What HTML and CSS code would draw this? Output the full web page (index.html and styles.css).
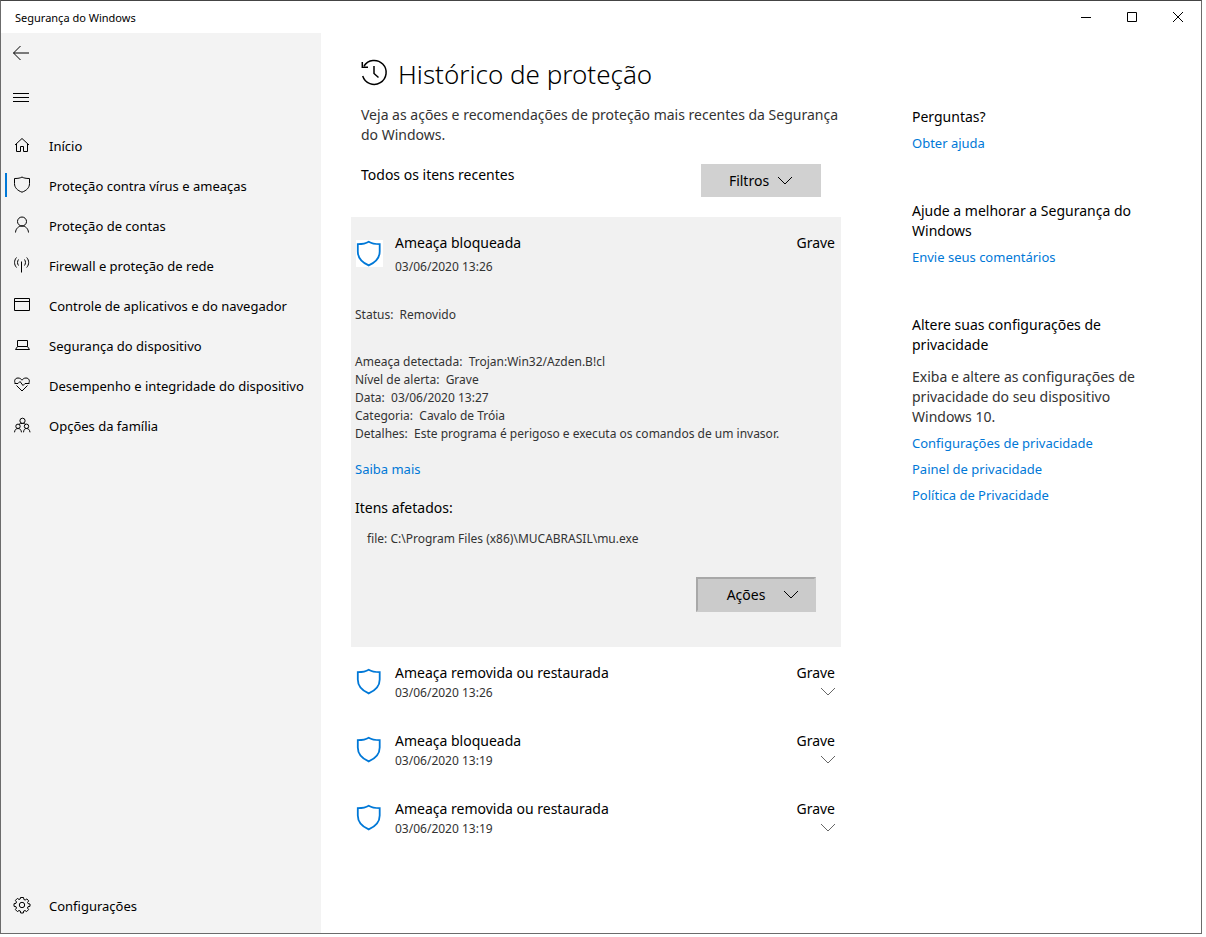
FILE: index.html
```html
<!DOCTYPE html>
<html lang="pt-BR">
  <head>
    <meta charset="utf-8">
    <meta name="viewport" content="width=device-width, initial-scale=1">
    <title>Segurança do Windows</title>
    <link rel="stylesheet" href="styles.css">
  </head>

  <body>
    <!-- symbols used more than once -->
    <svg class="sprite" aria-hidden="true">
      <symbol id="shield" viewBox="0 0 27 27">
        <path d="M12.700 1.800C10.500 3.200 7.500 4.200 1.800 4.200V11.500C1.800 18.500 6 22.500 12.700 25.400C19.400 22.500 23.700 18.500 23.700 11.500V4.200C18 4.200 15 3.200 12.700 1.800Z" />
      </symbol>
      <symbol id="chevron" viewBox="0 0 16 9">
        <path d="M1 1L8 8L15 1" />
      </symbol>
    </svg>

    <div class="window">
      <header class="titlebar">
        <span class="titlebar-text">Segurança do Windows</span>
        <div class="window-buttons">
          <button type="button" aria-label="Minimizar">
            <svg viewBox="0 0 12 12"><path d="M1 6.500H11" /></svg>
          </button>
          <button type="button" aria-label="Maximizar">
            <svg viewBox="0 0 12 12"><path d="M1.500 1.500H10.500V10.500H1.500Z" /></svg>
          </button>
          <button type="button" aria-label="Fechar">
            <svg viewBox="0 0 12 12"><path d="M1 1L11 11M11 1L1 11" /></svg>
          </button>
        </div>
      </header>

      <div class="body">
        <nav class="sidebar">
          <button class="nav-button" type="button" aria-label="Voltar">
            <svg viewBox="0 0 18 18"><path d="M17 9H1.500M8.500 2L1.500 9L8.500 16" /></svg>
          </button>
          <button class="nav-button" type="button" aria-label="Menu">
            <svg viewBox="0 0 18 18"><path d="M1 5.500H17M1 9.500H17M1 13.500H17" /></svg>
          </button>

          <ul class="nav-list">
            <li>
              <a href="#">
                <svg viewBox="0 0 18 18"><path d="M2 9L9 2.500L16 9M3.500 8V15.500H7.500V10.500H10.500V15.500H14.500V8" /></svg>
                Início
              </a>
            </li>
            <li>
              <a class="active" href="#" aria-current="page">
                <svg viewBox="0 0 18 18"><path d="M9 1C7.400 2 5.300 2.500 1.500 2.500V7.500C1.500 11.800 4.500 14.500 9 16.200C13.500 14.500 16.500 11.800 16.500 7.500V2.500C12.700 2.500 10.600 2 9 1Z" /></svg>
                Proteção contra vírus e ameaças
              </a>
            </li>
            <li>
              <a href="#">
                <svg viewBox="0 0 18 18"><circle cx="9" cy="5.500" r="4.500" /><path d="M2.500 16.500C2.800 12.500 5.500 10 9 10C12.500 10 15.200 12.500 15.500 16.500" /></svg>
                Proteção de contas
              </a>
            </li>
            <li>
              <a href="#">
                <svg viewBox="0 0 18 18"><path d="M8.500 5.500V16.500M5.500 3.500C4.200 5.200 4.200 7.800 5.500 9.500M11.500 3.500C12.800 5.200 12.800 7.800 11.500 9.500M3.500 1.500C.9 4.500 .9 8.500 3.500 11.500M13.700 1.500C16.300 4.500 16.300 8.500 13.700 11.500" /></svg>
                Firewall e proteção de rede
              </a>
            </li>
            <li>
              <a href="#">
                <svg viewBox="0 0 18 18"><path d="M1.500 2.500H16.500V14.500H1.500ZM1.500 5.500H16.500" /></svg>
                Controle de aplicativos e do navegador
              </a>
            </li>
            <li>
              <a href="#">
                <svg viewBox="0 0 18 18"><path d="M4.500 4.500H14.500V10.500H4.500ZM4.500 10.500L2.500 13.500H16.500L14.500 10.500" /></svg>
                Segurança do dispositivo
              </a>
            </li>
            <li>
              <a href="#">
                <svg viewBox="0 0 18 18"><path d="M2.500 7.500C.6 5 2 2 5 2C7 2 8.200 3 9 4.200C9.800 3 11 2 13 2C16 2 17.400 5 15.500 7.500M1.500 7.500H5L7 5.500L10 9.500L12 7.500H16.500M3.500 9.500L9 15L14.500 9.500" /></svg>
                Desempenho e integridade do dispositivo
              </a>
            </li>
            <li>
              <a href="#">
                <svg viewBox="0 0 18 18"><circle cx="9.500" cy="4.800" r="2.600" /><circle cx="5" cy="10.300" r="2.200" /><circle cx="13.500" cy="10.300" r="2.200" /><path d="M1.500 16.300C1.800 13.800 3 12.500 5 12.500C7 12.500 8.200 13.800 8.500 16.300M10.500 16.300C10.800 13.800 11.500 12.500 13.500 12.500C15.500 12.500 16.700 13.800 17 16.300M6 8.300C6.800 7.600 8 7.400 9.500 7.400C11 7.400 12.200 7.800 12.800 8.500" /></svg>
                Opções da família
              </a>
            </li>
          </ul>

          <ul class="nav-list nav-bottom">
            <li>
              <a href="#">
                <svg viewBox="0 0 18 18"><circle cx="9" cy="9" r="2.700" /><path d="M7.500 1.500H10.500L10.900 3.500L12.200 4L13.900 2.900L15.700 4.900L14.500 6.500L15 7.600L17 8V10.300L15 10.700L14.500 12L15.600 13.600L13.600 15.600L12 14.500L10.700 15L10.300 17H7.700L7.300 15L6 14.500L4.400 15.600L2.400 13.600L3.500 12L3 10.700L1 10.300V7.700L3 7.300L3.500 6L2.400 4.400L4.400 2.400L6 3.500L7.200 3Z" /></svg>
                Configurações
              </a>
            </li>
          </ul>
        </nav>

        <main class="content">
          <h1>
            <svg viewBox="0 0 28 28"><path d="M4 7A12 12 0 1 1 2.700 17M2.300 3V8.300H8M14 7V14.500L18.500 18.500" /></svg>
            Histórico de proteção
          </h1>
          <p class="intro">Veja as ações e recomendações de proteção mais recentes da Segurança do Windows.</p>

          <div class="toolbar">
            <h2>Todos os itens recentes</h2>
            <button class="drop-button" type="button" aria-haspopup="menu">
              Filtros
              <svg class="chevron"><use href="#chevron" /></svg>
            </button>
          </div>

          <section class="threat open">
            <div class="threat-head">
              <svg class="shield"><use href="#shield" /></svg>
              <div class="threat-title">
                <h3>Ameaça bloqueada</h3>
                <p>03/06/2020 13:26</p>
              </div>
              <span class="severity">Grave</span>
            </div>

            <p class="status">Status:&nbsp; Removido</p>

            <div class="info">
              <p>Ameaça detectada:&nbsp; Trojan:Win32/Azden.B!cl</p>
              <p>Nível de alerta:&nbsp; Grave</p>
              <p>Data:&nbsp; 03/06/2020 13:27</p>
              <p>Categoria:&nbsp; Cavalo de Tróia</p>
              <p>Detalhes:&nbsp; Este programa é perigoso e executa os comandos de um invasor.</p>
            </div>

            <a class="more" href="#">Saiba mais</a>

            <h4>Itens afetados:</h4>
            <p class="file">file: C:\Program Files (x86)\MUCABRASIL\mu.exe</p>

            <button class="drop-button actions" type="button" aria-haspopup="menu">
              Ações
              <svg class="chevron"><use href="#chevron" /></svg>
            </button>
          </section>

          <section class="threat">
            <div class="threat-head">
              <svg class="shield"><use href="#shield" /></svg>
              <div class="threat-title">
                <h3>Ameaça removida ou restaurada</h3>
                <p>03/06/2020 13:26</p>
              </div>
              <div class="severity">
                Grave
                <button class="expand" type="button" aria-label="Expandir">
                  <svg class="chevron"><use href="#chevron" /></svg>
                </button>
              </div>
            </div>
          </section>

          <section class="threat">
            <div class="threat-head">
              <svg class="shield"><use href="#shield" /></svg>
              <div class="threat-title">
                <h3>Ameaça bloqueada</h3>
                <p>03/06/2020 13:19</p>
              </div>
              <div class="severity">
                Grave
                <button class="expand" type="button" aria-label="Expandir">
                  <svg class="chevron"><use href="#chevron" /></svg>
                </button>
              </div>
            </div>
          </section>

          <section class="threat">
            <div class="threat-head">
              <svg class="shield"><use href="#shield" /></svg>
              <div class="threat-title">
                <h3>Ameaça removida ou restaurada</h3>
                <p>03/06/2020 13:19</p>
              </div>
              <div class="severity">
                Grave
                <button class="expand" type="button" aria-label="Expandir">
                  <svg class="chevron"><use href="#chevron" /></svg>
                </button>
              </div>
            </div>
          </section>
        </main>

        <aside class="help">
          <section>
            <h2>Perguntas?</h2>
            <a href="#">Obter ajuda</a>
          </section>
          <section>
            <h2>Ajude a melhorar a Segurança do Windows</h2>
            <a href="#">Envie seus comentários</a>
          </section>
          <section>
            <h2>Altere suas configurações de privacidade</h2>
            <p>Exiba e altere as configurações de privacidade do seu dispositivo Windows 10.</p>
            <a href="#">Configurações de privacidade</a>
            <a href="#">Painel de privacidade</a>
            <a href="#">Política de Privacidade</a>
          </section>
        </aside>
      </div>
    </div>
  </body>
</html>
```
FILE: styles.css
```css
* {
  box-sizing: border-box;
  margin: 0;
}

body {
  min-height: 100vh;
  display: flex;
  padding: 0 4px 3px 0;
  background-color: #fff;
  color: #000;
  font-family: "Noto Sans", "Open Sans", sans-serif;
  font-size: 14px;
  line-height: 20px;
}

h2,
h3,
h4 {
  font-size: 14px;
  font-weight: 400;
}

a {
  color: #0078d7;
  text-decoration: none;
}

button {
  border: 0;
  padding: 0;
  background-color: transparent;
  color: inherit;
  font: inherit;
}

svg {
  flex: none;
  fill: none;
  stroke: currentColor;
}

.sprite {
  position: absolute;
  width: 0;
  height: 0;
}

.window {
  flex: 1;
  display: flex;
  flex-direction: column;
  border: 1px solid #6b6b6b;
  border-top-color: #444;
}

/* title bar */
.titlebar {
  display: flex;
  justify-content: space-between;
  align-items: center;
  height: 32px;
  padding-left: 14px;
}

.titlebar-text {
  padding-top: 2px;
  font-size: 11px;
}

.window-buttons {
  display: flex;
}

.window-buttons button {
  display: grid;
  place-items: center;
  width: 46px;
  height: 32px;
}

.window-buttons svg {
  width: 12px;
  height: 12px;
}

.body {
  flex: 1;
  display: flex;
}

/* sidebar */
.sidebar {
  flex: none;
  display: flex;
  flex-direction: column;
  width: 320px;
  padding-bottom: 7px;
  background-color: #f3f3f3;
}

.nav-button {
  display: flex;
  align-items: center;
  width: 40px;
  height: 40px;
  margin-bottom: 4px;
  padding-left: 11px;
}

.sidebar svg {
  width: 18px;
  height: 18px;
}

.nav-list {
  margin-top: 5px;
  padding: 0;
  list-style: none;
}

.nav-list a {
  display: flex;
  align-items: center;
  gap: 18px;
  height: 40px;
  padding-left: 12px;
  color: #000;
  font-size: 13px;
}

.nav-list svg {
  margin-bottom: 2px;
}

.nav-list .active {
  padding-left: 4px;
}

.nav-list .active::before {
  content: "";
  width: 2px;
  height: 24px;
  margin: 0 -12px 2px 0;
  background-color: #0078d7;
}

.nav-bottom {
  margin-top: auto;
}

/* protection history */
.content {
  flex: 0 1 520px;
  padding: 23px 0 20px 30px;
}

h1 {
  display: flex;
  align-items: center;
  gap: 10px;
  padding-left: 9px;
  font-size: 26px;
  font-weight: 300;
  line-height: 36px;
}

h1 svg {
  width: 28px;
  height: 28px;
  margin-bottom: 2px;
  stroke-width: 1.5;
}

.intro {
  margin-top: 13px;
  padding-left: 10px;
  color: #333;
}

.toolbar {
  display: flex;
  justify-content: space-between;
  margin: 19px 0 20px;
  padding: 0 20px 0 10px;
}

.toolbar h2 {
  line-height: 22px;
}

.drop-button {
  display: flex;
  justify-content: center;
  align-items: center;
  gap: 8px;
  width: 120px;
  height: 33px;
  background-color: #d1d1d1;
}

.chevron {
  width: 16px;
  height: 9px;
}

.threat {
  padding: 16px 5px 13px 4px;
}

.threat.open {
  padding-bottom: 35px;
  background-color: #f1f1f1;
}

.threat-head {
  display: flex;
}

.shield {
  width: 27px;
  height: 27px;
  margin: 5px 12px 0 1px;
  color: #0078d7;
  stroke-width: 1.8;
}

.open .shield {
  margin-top: 7px;
  background-color: #fff;
}

.threat-title {
  flex: 1;
}

.threat p {
  color: #333;
  font-size: 12px;
  line-height: 18px;
}

.threat-title p {
  margin-top: 1px;
}

.open .threat-title p {
  margin-top: 5px;
}

.severity {
  display: flex;
  flex-direction: column;
  align-items: flex-end;
  padding-right: 1px;
}

.expand {
  display: flex;
  margin: 4px -1px 0 0;
  color: #666;
}

.open .status {
  margin: 30px 0 29px;
}

.more {
  display: inline-block;
  margin: 16px 0 19px;
  font-size: 13px;
}

.open .file {
  margin: 12px 0 29px;
  padding-left: 12px;
}

.actions {
  gap: 18px;
  height: 35px;
  margin: 0 20px 0 auto;
  border: 2px solid;
  border-color: #a8a8a8 #cbcbcb #cbcbcb #a8a8a8;
  padding-left: 14px;
  background-color: #cbcbcb;
}

/* help column */
.help {
  flex: 0 1 230px;
  display: flex;
  flex-direction: column;
  gap: 48px;
  margin-left: 71px;
  padding-top: 74px;
}

.help p {
  margin-top: 12px;
  color: #333;
}

.help a {
  display: block;
  width: fit-content;
  margin-top: 6px;
  font-size: 13px;
}
```
